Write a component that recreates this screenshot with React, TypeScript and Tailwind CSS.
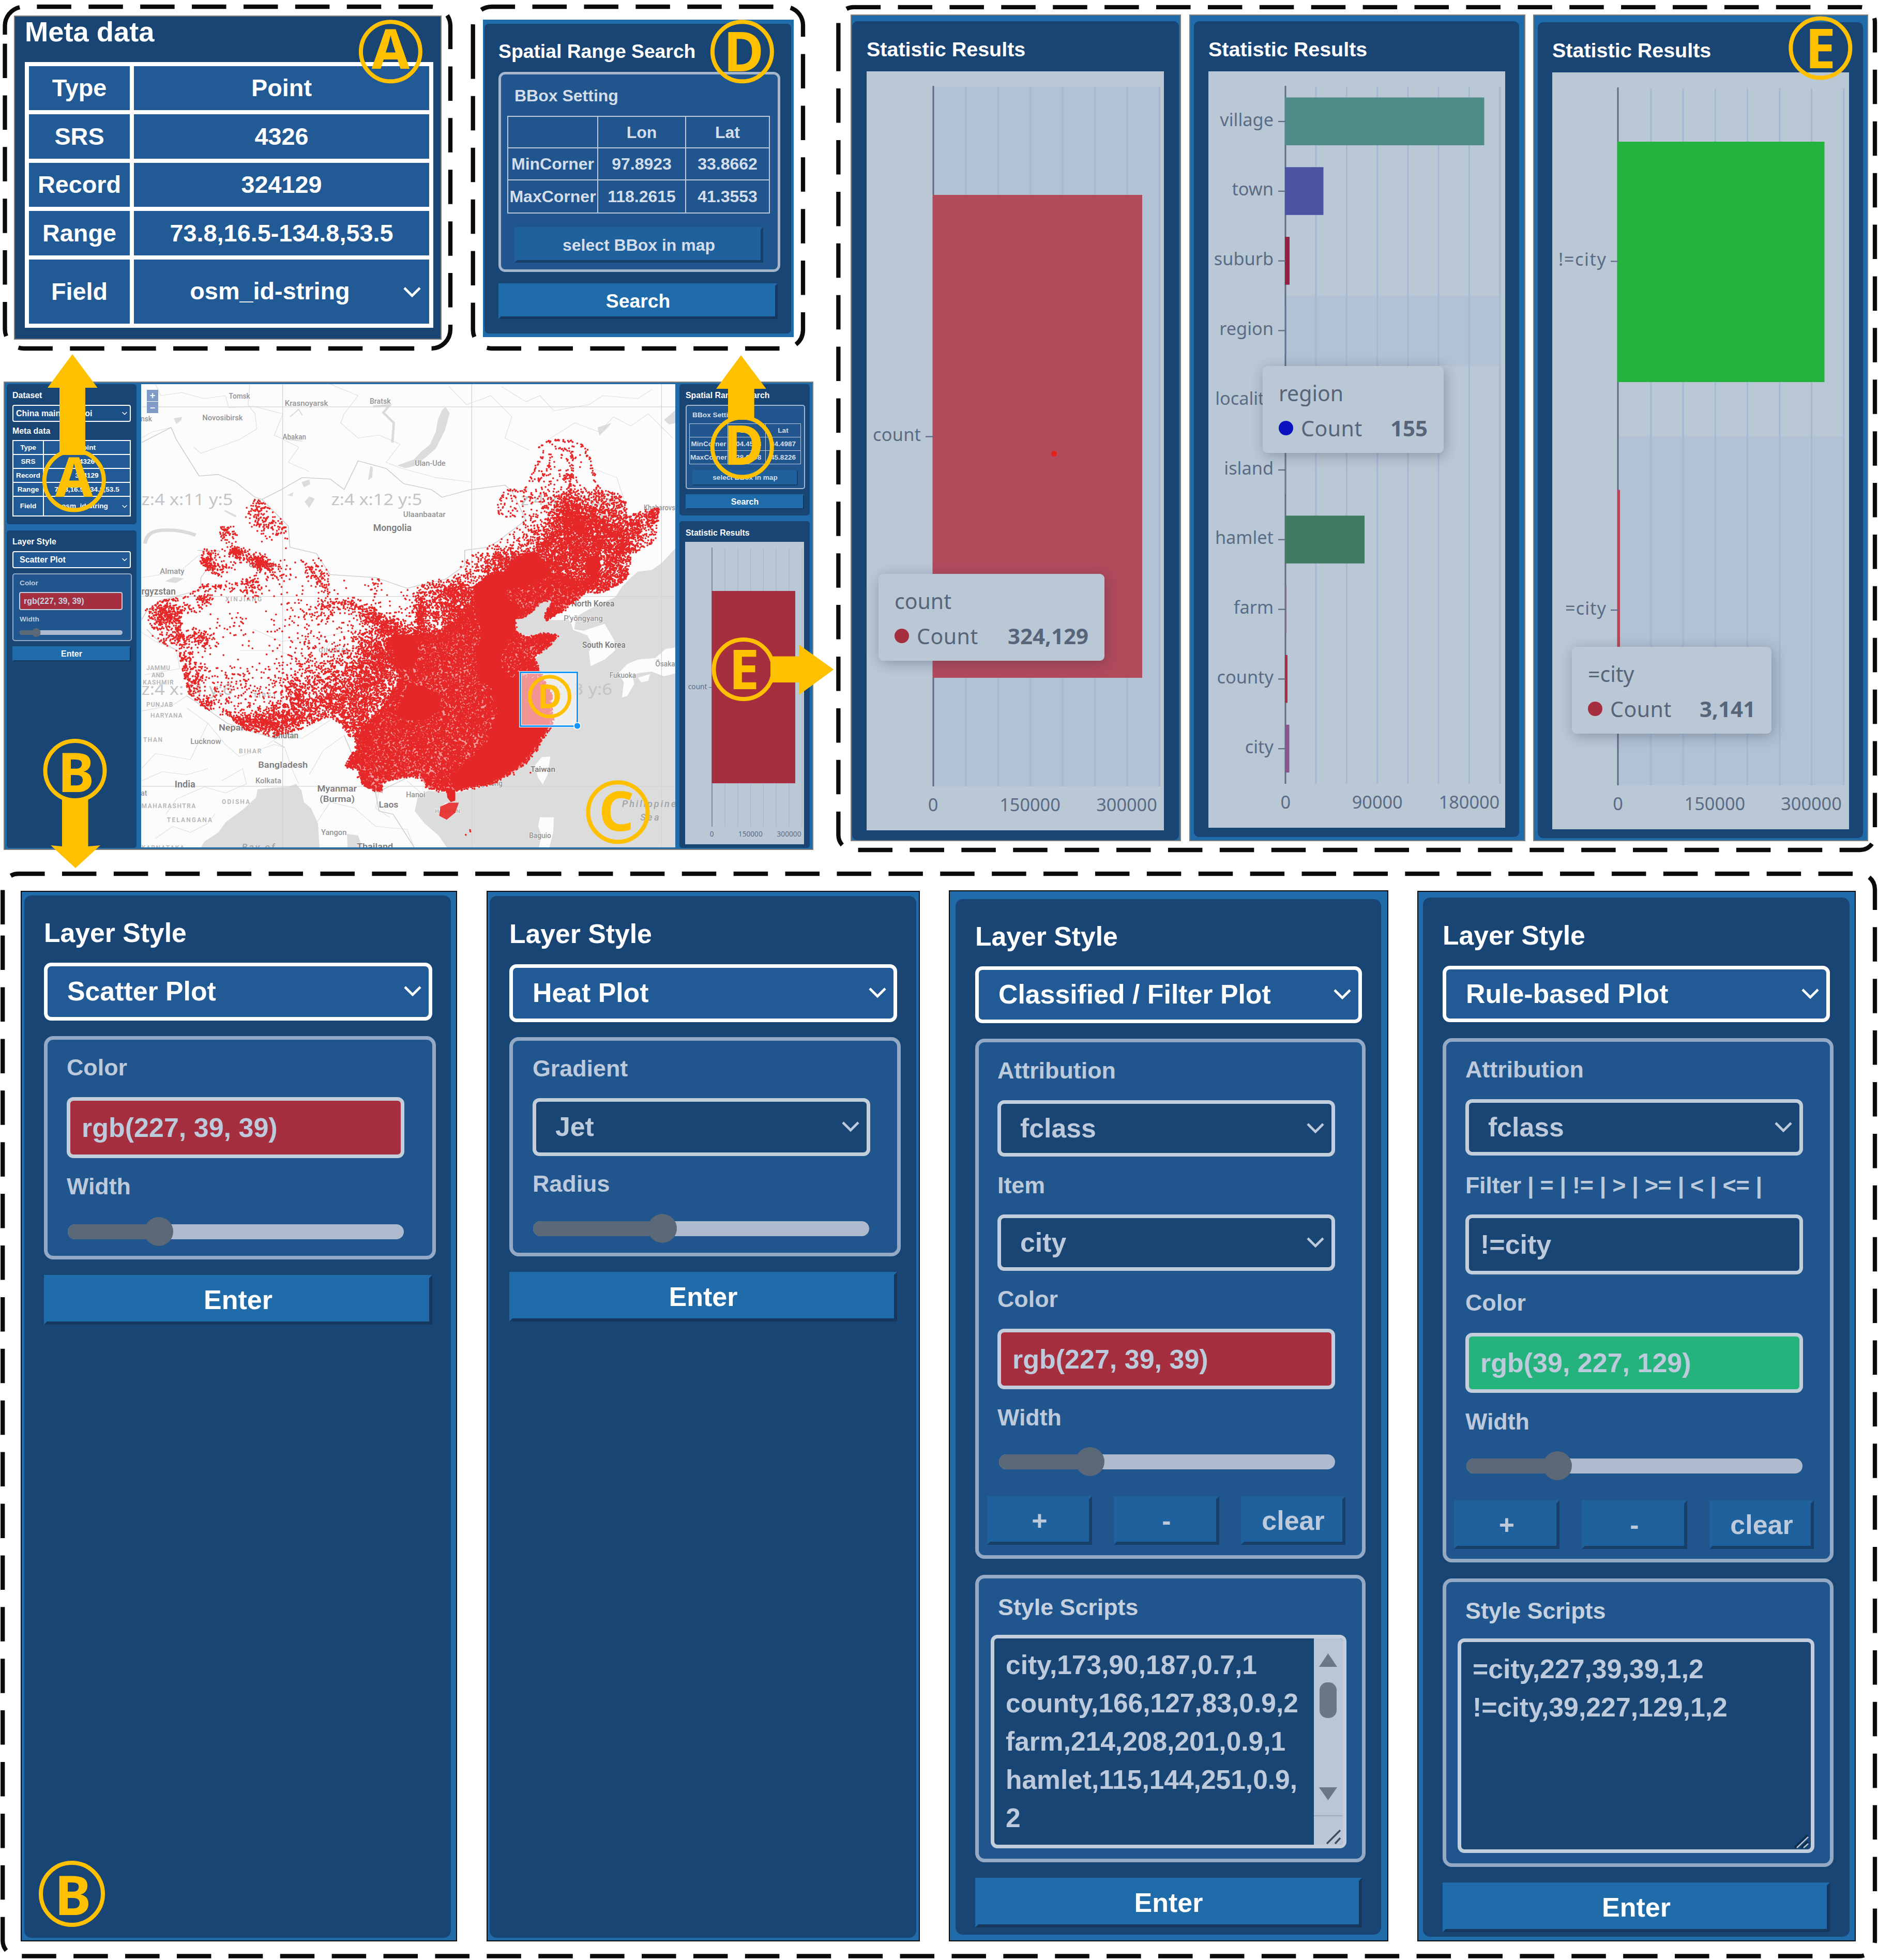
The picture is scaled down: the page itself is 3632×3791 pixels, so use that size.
import React from "react";

/* ---------- small shared pieces ---------- */

function Chevron({ className, w = 4.6 }: { className: string; w?: number }) {
  return (
    <svg className={className} viewBox="0 0 34 22" fill="none" stroke="currentColor" strokeWidth={w}>
      <path d="M2 3 L17 18 L32 3" />
    </svg>
  );
}

function Text({ className, children }: { className: string; children: React.ReactNode }) {
  return <div className={`flex shrink-0 items-center whitespace-nowrap leading-none ${className}`}>{children}</div>;
}

function Slider({ className, track, thumb, at }: { className: string; track: string; thumb: string; at: number }) {
  return (
    <div className={`relative flex shrink-0 items-center ${className}`}>
      <div className={`w-full overflow-hidden rounded-full bg-[#aebacd] ${track}`}>
        <div className="h-full bg-[#5b6878]" style={{ width: `${at}%` }} />
      </div>
      <div className={`absolute top-0 -translate-x-1/2 rounded-full bg-[#5b6878] ${thumb}`} style={{ left: `${at}%` }} />
    </div>
  );
}

function Button({ className, children, soft }: { className: string; children: React.ReactNode; soft?: boolean }) {
  const tone = soft
    ? "bg-[#1f619c] border-t-[#1f619c] border-l-[#1f619c] border-r-[#173f6a] border-b-[#173f6a]"
    : "bg-[#206cab] border-t-[#206cab] border-l-[#206cab] border-r-[#15385c] border-b-[#15385c]";
  return (
    <button className={`flex shrink-0 items-center justify-center whitespace-nowrap font-bold leading-none ${tone} ${className}`}>
      {children}
    </button>
  );
}

type DashProps = { x: number; y: number; r: number; b: number; radius: number; start: number };

function DashedFrame({ x, y, r, b, radius, start }: DashProps) {
  const q = radius;
  const d = `M${x} ${start}V${y + q}A${q} ${q} 0 0 1 ${x + q} ${y}H${r - q}A${q} ${q} 0 0 1 ${r} ${y + q}V${b - q}A${q} ${q} 0 0 1 ${r - q} ${b}H${x + q}A${q} ${q} 0 0 1 ${x} ${b - q}Z`;
  return <path d={d} fill="none" stroke="#0b0b0b" strokeWidth="8.3" strokeDasharray="66.5 33.4" />;
}

/* ---------- metadata and bbox tables ---------- */

const META = [
  ["Type", "Point"],
  ["SRS", "4326"],
  ["Record", "324129"],
  ["Range", "73.8,16.5-134.8,53.5"],
];

function MetaTable({ className, chevron, pad }: { className: string; chevron: string; pad: string }) {
  const cell = "flex items-center justify-center bg-[#215a95] leading-none whitespace-nowrap";
  return (
    <div className={`grid shrink-0 bg-white font-bold text-white ${className}`}>
      {META.map(([k, v]) => (
        <React.Fragment key={k}>
          <div className={cell}>{k}</div>
          <div className={cell}>{v}</div>
        </React.Fragment>
      ))}
      <div className={cell}>Field</div>
      <div className={`${cell} relative ${pad}`}>
        osm_id-string
        <Chevron className={`absolute ${chevron}`} />
      </div>
    </div>
  );
}

function BBoxTable({ className, rows }: { className: string; rows: string[][] }) {
  return (
    <div className={`grid shrink-0 bg-[#bccadb] font-bold text-[#d3deea] ${className}`}>
      {rows.flat().map((t, i) => (
        <div key={i} className="flex items-center justify-center whitespace-nowrap bg-[#20558e] leading-none">
          {t}
        </div>
      ))}
    </div>
  );
}

/* ---------- bar charts ---------- */

type Bar = { y: number; h: number; to: number; fill: string };
type ChartProps = {
  className: string;
  box: [number, number, number, number];
  axis: number;
  top: number;
  bottom: number;
  grid: number[];
  band?: [number, number, number];
  bars: Bar[];
  cats: [string, number, number?][];
  labelX: number;
  ticks: [string, number][];
  tickY: number;
  size: number;
  line: number;
  tickLen: number;
  children?: React.ReactNode;
};

function BarChart(p: ChartProps) {
  return (
    <div className={`relative shrink-0 bg-[#bac7d5] ${p.className}`}>
      <svg className="block h-full w-full" viewBox={p.box.join(" ")} preserveAspectRatio="none">
        {p.band && <rect x={p.axis} y={p.band[0]} width={p.band[2] - p.axis} height={p.band[1] - p.band[0]} fill="#b2c1d3" />}
        {p.grid.map((g) => (
          <line key={g} x1={g} x2={g} y1={p.top + 2} y2={p.bottom} stroke="#a5b8d1" strokeWidth={p.line} />
        ))}
        <line x1={p.axis} x2={p.axis} y1={p.top} y2={p.bottom} stroke="#5c6e86" strokeWidth={p.line} />
        {p.bars.map((b) => (
          <rect key={b.y} x={p.axis - p.line / 3} y={b.y} width={b.to - p.axis + p.line / 3} height={b.h} fill={b.fill} />
        ))}
        <g fill="#5a6c85" fontSize={p.size} fontWeight={400} fontFamily="'Noto Sans', sans-serif">
          {p.cats.map(([t, y, w]) => (
            <g key={t}>
              <line x1={p.axis - p.tickLen} x2={p.axis} y1={y} y2={y} stroke="#5c6e86" strokeWidth={p.line * 0.75} />
              <text x={p.labelX} y={y + p.size * 0.25} textAnchor="end" textLength={w}>
                {t}
              </text>
            </g>
          ))}
          {p.ticks.map(([t, x]) => (
            <text key={t} x={x} y={p.tickY} textAnchor="middle">
              {t}
            </text>
          ))}
        </g>
      </svg>
      {p.children}
    </div>
  );
}

function Tooltip({ className, name, value, dot }: { className: string; name: string; value: string; dot: string }) {
  return (
    <div
      className={`absolute flex h-[168px] flex-col rounded-[9px] bg-[#bac7d5] px-[31px] pt-[18px] font-['Noto_Sans'] text-[41px] text-[#56657a] shadow-[3px_5px_26px_rgba(40,50,75,0.33)] ${className}`}
    >
      <div className="flex h-[68px] items-center leading-none">{name}</div>
      <div className="flex h-[68px] items-center leading-none">
        <span className={`mr-[15px] size-[28px] rounded-full ${dot}`} />
        <span className="tracking-[0.5px]">Count</span>
        <span className="ml-auto text-[42px] font-bold">{value}</span>
      </div>
    </div>
  );
}

const CATS = ["village", "town", "suburb", "region", "locality", "island", "hamlet", "farm", "county", "city"];
const CLASS_BARS: [number, number, string][] = [
  [0, 2870.5, "#4f8c88"],
  [1, 2559.5, "#4a54a3"],
  [2, 2494, "#96213f"],
  [3, 2487.5, "#6076a0"],
  [5, 2487.3, "#77798c"],
  [6, 2639, "#417c62"],
  [7, 2488, "#806c83"],
  [8, 2490, "#b02c44"],
  [9, 2493.5, "#87568a"],
];

/* ---------- map ---------- */

function makeRandom(seed: number) {
  let s = seed;
  return () => {
    s = (s * 1664525 + 1013904223) % 4294967296;
    return s / 4294967296;
  };
}

const OUTLINE = [
  35, 770, 75, 735, 150, 720, 190, 700, 180, 655, 190, 590, 200, 565, 240, 570, 245, 490, 310, 480, 320, 430, 345, 402, 370, 402, 400, 445,
  445, 495, 440, 560, 520, 578, 560, 650, 690, 660, 780, 700, 850, 665, 910, 665, 945, 590, 1010, 560, 1090, 500, 1120, 470, 1040, 455,
  1045, 410, 1060, 370, 1110, 380, 1130, 330, 1160, 265, 1145, 235, 1190, 205, 1240, 205, 1290, 230, 1310, 300, 1330, 370, 1380, 385, 1400,
  410, 1410, 460, 1450, 450, 1503, 428, 1480, 550, 1415, 580, 1420, 610, 1405, 670, 1340, 710, 1290, 715, 1230, 765, 1180, 803, 1172, 785,
  1195, 730, 1160, 745, 1120, 790, 1090, 795, 1095, 840, 1130, 857, 1170, 840, 1212, 850, 1190, 885, 1143, 920, 1160, 975, 1195, 1040, 1200,
  1140, 1150, 1230, 1100, 1290, 1030, 1340, 910, 1368, 840, 1358, 815, 1318, 780, 1318, 710, 1340, 710, 1372, 690, 1368, 640, 1340, 640, 1300,
  600, 1285, 635, 1210, 590, 1150, 560, 1120, 500, 1140, 470, 1172, 395, 1185, 320, 1165, 270, 1120, 205, 1098, 150, 1040, 125, 905, 50, 860,
];

/* the thickly covered east of the country */
const EAST = [
  970, 690, 1010, 650, 1055, 642, 1190, 640, 1285, 670, 1333, 640, 1310, 690, 1235, 760, 1180, 800, 1175, 785, 1196, 730, 1165, 742, 1120, 790,
  1088, 795, 1092, 840, 1128, 858, 1170, 845, 1208, 853, 1188, 885, 1143, 922, 1160, 975, 1192, 1040, 1195, 1140, 1150, 1225, 1110, 1283, 1030,
  1338, 910, 1366, 840, 1355, 815, 1316, 780, 1316, 710, 1336, 710, 1370, 690, 1365, 650, 1342, 640, 1290, 604, 1283, 632, 1245, 640, 1190, 655,
  1150, 700, 1110, 735, 1040, 760, 990, 725, 930, 720, 880, 745, 845, 820, 850, 880, 830, 920, 800, 960, 740,
];

/* areas where the marks merge into one colour */
const SOLID = [
  "M972 690L1012 655L1040 642L1058 650L1062 730L1095 745L1115 775L1090 795L1090 838L1060 870L1045 950L1070 985L1120 1000L1150 985L1185 1050L1188 1140L1140 1225L1100 1280L1030 1330L920 1360L900 1320L960 1260L1010 1200L1040 1100L1020 1020L985 1000L975 900L1000 850L980 800L975 740Z",
  "M1010 655L1055 642L1085 600L1120 580L1148 575L1190 635L1185 655L1120 690L1060 700Z",
  "M1295 592L1328 585L1335 625L1318 655L1290 650Z",
  "M735 850L800 850L815 910L800 950L760 960L740 900Z",
  "M780 1010L830 1020L880 1050L870 1100L830 1130L780 1130L745 1110L770 1060Z",
];

/* cx, cy, spread x, spread y, count */
const CLUSTERS = [
  [350, 425, 14, 20, 60], [370, 480, 18, 26, 80], [415, 500, 20, 22, 50], [265, 510, 16, 18, 70], [215, 575, 18, 10, 40], [205, 610, 14, 12, 80],
  [240, 625, 24, 12, 60], [290, 575, 12, 9, 120], [320, 590, 20, 10, 50], [362, 612, 14, 12, 170], [400, 640, 20, 14, 50], [335, 690, 16, 18, 80],
  [200, 730, 12, 10, 60], [240, 690, 40, 8, 45], [88, 780, 22, 24, 260], [60, 790, 18, 22, 60], [125, 800, 8, 28, 70], [155, 760, 30, 8, 30],
  [150, 855, 36, 12, 120], [110, 870, 30, 14, 60], [200, 870, 14, 14, 45], [145, 930, 12, 22, 70], [175, 965, 20, 24, 60], [165, 1020, 16, 22, 80],
  [205, 1075, 12, 12, 50], [515, 640, 22, 22, 50], [540, 690, 10, 16, 20], [585, 745, 34, 12, 60], [540, 780, 40, 22, 50], [650, 765, 30, 14, 60],
  [685, 795, 20, 12, 130], [725, 825, 18, 14, 150], [300, 820, 50, 30, 24], [690, 690, 12, 20, 22], [275, 1050, 50, 44, 130], [320, 1135, 34, 16, 220],
  [400, 1140, 40, 20, 380], [440, 1110, 46, 30, 260], [465, 1035, 14, 22, 90], [520, 1090, 50, 32, 360], [480, 1000, 60, 40, 150], [600, 1010, 50, 44, 420],
  [570, 930, 60, 50, 160], [660, 900, 30, 50, 220], [630, 1100, 44, 50, 650], [690, 1010, 40, 60, 750], [710, 920, 30, 40, 400], [650, 1180, 24, 50, 320],
  [620, 1260, 14, 14, 120], [840, 720, 30, 30, 130], [818, 790, 8, 36, 170], [780, 800, 50, 30, 80], [920, 700, 34, 20, 280], [890, 780, 50, 36, 380],
  [800, 850, 60, 16, 420], [930, 760, 30, 50, 500], [960, 640, 30, 30, 50], [1030, 580, 50, 30, 60], [1120, 540, 50, 30, 110], [1190, 570, 30, 40, 320],
  [1245, 450, 34, 40, 700], [1290, 480, 40, 40, 700], [1260, 540, 60, 50, 1200], [1300, 620, 50, 50, 800], [1210, 640, 50, 30, 400], [1370, 490, 36, 44, 480],
  [1400, 540, 36, 30, 420], [1455, 480, 30, 28, 260], [1490, 445, 12, 16, 100], [1385, 610, 30, 40, 380], [1340, 680, 40, 20, 320], [1370, 410, 28, 20, 100],
  [1330, 385, 16, 14, 40], [1160, 390, 40, 20, 50], [1080, 420, 30, 24, 40], [1235, 260, 34, 30, 30], [1200, 330, 40, 12, 34], [1245, 330, 6, 40, 30],
  [1160, 470, 40, 40, 60], [1170, 860, 26, 12, 200], [1190, 780, 20, 14, 120], [1180, 1100, 10, 60, 100], [450, 1060, 120, 90, 180], [560, 820, 90, 50, 40],
  [1100, 640, 60, 40, 1500], [1100, 1100, 60, 160, 1200],
];

/* chains of points along borders, rivers and roads */
const CHAINS = [
  [1145, 238, 1190, 208, 1240, 206, 1288, 228, 1308, 300, 1328, 368, 1380, 384, 1402, 412, 1408, 458, 1500, 430],
  [1165, 262, 1140, 320, 1112, 378, 1062, 370, 1044, 410, 1042, 455],
  [1200, 232, 1250, 240, 1255, 300, 1242, 390],
  [1190, 262, 1185, 300, 1150, 350],
  [1500, 430, 1485, 540, 1420, 585, 1418, 610, 1400, 668, 1340, 708],
  [35, 768, 75, 738, 150, 722, 195, 690, 260, 688],
  [130, 905, 150, 1000, 160, 1045, 212, 1094],
  [190, 590, 215, 640, 250, 655],
  [480, 600, 520, 655, 555, 718],
  [560, 740, 610, 742, 660, 770, 730, 830],
  [250, 1090, 320, 1160, 395, 1182, 470, 1160, 540, 1120],
];

function inside(px: number, py: number, poly: number[]) {
  let hit = false;
  for (let i = 0, j = poly.length - 2; i < poly.length; j = i, i += 2) {
    const xi = poly[i], yi = poly[i + 1], xj = poly[j], yj = poly[j + 1];
    if (yi > py !== yj > py && px < ((xj - xi) * (py - yi)) / (yj - yi) + xi) hit = !hit;
  }
  return hit;
}

const SX = 0.676;
const SY = 0.5867;

function buildPoints() {
  const rnd = makeRandom(7);
  const gauss = () => rnd() + rnd() + rnd() + rnd() - 2;
  const out: string[] = [];
  const add = (x: number, y: number) => out.push(`M${(x * SX + 260).toFixed(1)} ${(y * SY + 730).toFixed(1)}h0`);
  for (const [cx, cy, sx, sy, n] of CLUSTERS) {
    for (let i = 0; i < n; i++) {
      const x = cx + gauss() * sx * 1.7;
      const y = cy + gauss() * sy * 1.7;
      if (inside(x, y, OUTLINE)) add(x, y);
    }
  }
  for (let i = 0; i < 42000; i++) {
    const x = 600 + rnd() * 740;
    const y = 640 + rnd() * 735;
    if (inside(x, y, EAST)) add(x + gauss() * 5, y + gauss() * 5);
  }
  for (const c of CHAINS) {
    for (let i = 0; i + 3 < c.length; i += 2) {
      const len = Math.hypot(c[i + 2] - c[i], c[i + 3] - c[i + 1]);
      const n = Math.round(len / 5);
      for (let k = 0; k < n; k++) {
        const t = rnd();
        add(c[i] + (c[i + 2] - c[i]) * t + gauss() * 4, c[i + 1] + (c[i + 3] - c[i + 1]) * t + gauss() * 4);
      }
    }
  }
  for (let i = 0; i < 600; i++) {
    const x = 400 + rnd() * 900;
    const y = 600 + rnd() * 560;
    if (inside(x, y, OUTLINE)) add(x, y);
  }
  for (let i = 0; i < 70; i++) {
    const x = 200 + rnd() * 300;
    const y = 700 + rnd() * 350;
    if (inside(x, y, OUTLINE)) add(x, y);
  }
  [[948, 1508], [960, 1492], [961, 1497], [1133, 1303]].forEach(([x, y]) => add(x, y));
  return out.join("");
}

const POINTS = buildPoints();

/* text, left, centre y, width, size, tone: 0 city, 1 country, 2 region, 3 tile, 4 sea */
const PLACES: [string, number, number, number, number, number][] = [
  ["Tomsk", 270, 61, 61, 15, 0], ["Krasnoyarsk", 430, 85, 124, 15, 0], ["Bratsk", 673, 77, 60, 15, 0], ["Novosibirsk", 194, 133, 116, 15, 0],
  ["nsk", 18, 135, 32, 15, 0], ["Abakan", 424, 195, 67, 15, 0], ["Ulan-Ude", 802, 282, 88, 15, 0], ["Ulaanbaatar", 769, 451, 121, 15, 0],
  ["Khabarovs", 1457, 428, 90, 15, 0], ["Almaty", 73, 638, 70, 15, 0], ["Urumqi", 327, 617, 74, 15, 0], ["Xining", 680, 917, 56, 15, 0],
  ["Lucknow", 160, 1199, 88, 15, 0], ["Kolkata", 346, 1329, 74, 15, 0], ["Hanoi", 777, 1375, 55, 15, 0], ["Yangon", 534, 1499, 73, 15, 0],
  ["Baguio", 1129, 1510, 63, 15, 0], ["Fukuoka", 1359, 981, 76, 15, 0], ["Ōsaka", 1490, 943, 57, 15, 0], ["P'yŏngyang", 1228, 794, 112, 15, 0],
  ["Hong Kong", 955, 1338, 98, 15, 0], ["at", 18, 1370, 18, 15, 0], ["Mongolia", 683, 496, 110, 18, 1], ["rgyzstan", 20, 705, 98, 18, 1],
  ["North Korea", 1250, 745, 123, 16, 1], ["South Korea", 1281, 881, 124, 16, 1], ["Nepal", 241, 1154, 70, 17, 1], ["Bhutan", 397, 1180, 72, 16, 1],
  ["Bangladesh", 354, 1276, 142, 17, 1], ["India", 115, 1341, 59, 18, 1], ["Myanmar", 523, 1354, 113, 17, 1], ["(Burma)", 530, 1389, 100, 17, 1],
  ["Laos", 699, 1408, 56, 17, 1], ["Thailand", 636, 1545, 104, 17, 1], ["Taiwan", 1133, 1292, 71, 15, 1],
  ["JAMMU", 34, 958, 68, 12, 2], ["AND", 49, 982, 36, 12, 2], ["KASHMIR", 24, 1005, 88, 12, 2], ["PUNJAB", 34, 1079, 76, 12, 2],
  ["HARYANA", 46, 1115, 91, 12, 2], ["THAN", 25, 1194, 55, 12, 2], ["BIHAR", 299, 1231, 64, 12, 2], ["ODISHA", 250, 1398, 80, 12, 2],
  ["MAHARASHTRA", 20, 1412, 155, 12, 2], ["TELANGANA", 93, 1459, 129, 12, 2], ["KARNATAKA", 20, 1550, 122, 12, 2], ["XINJIANG", 260, 731, 104, 12, 2],
  ["QINGHAI", 527, 899, 82, 12, 2], ["TIBET", 340, 1048, 66, 12, 2], ["HAINAN", 860, 1430, 72, 11, 2], ["INNER", 1040, 597, 66, 12, 2],
  ["MONGOLIA", 1018, 623, 110, 12, 2], ["JIANG", 1330, 458, 78, 12, 2],
  ["z:4 x:11 y:5", 20, 402, 262, 31, 3], ["z:4 x:12 y:5", 563, 402, 260, 31, 3], ["z:4 x:13 y:5", 1105, 402, 260, 31, 3],
  ["z:4 x:11 y:6", 20, 1028, 262, 31, 3], ["z:4 x:13 y:6", 1105, 1028, 262, 31, 3],
  ["Philippine", 1395, 1405, 154, 18, 4], ["Sea", 1447, 1450, 54, 18, 4], ["Bay of", 307, 1549, 94, 18, 4],
];
const TONES = ["#949494", "#7d7d7d", "#b4b4b4", "#c4c4c4", "#a0a3a6"];
const WEIGHTS = [500, 600, 600, 400, 500];

function PlaceLabels({ tiles }: { tiles: boolean }) {
  return (
    <g stroke="#fcfcfc" strokeWidth={tiles ? 0 : 2} paintOrder="stroke" strokeOpacity="0.6">
      {PLACES.filter((p) => (p[5] === 3) === tiles).map(([t, x, y, w, size, tone]) => (
        <text
          key={t}
          x={x * SX + 260}
          y={y * SY + 730 + size * 0.36}
          fontSize={size}
          fill={TONES[tone]}
          fontWeight={WEIGHTS[tone]}
          fontStyle={tone === 4 ? "italic" : "normal"}
          fontFamily={tone === 3 ? "'Noto Sans', sans-serif" : "Roboto, sans-serif"}
          strokeWidth={tone === 4 ? 0 : undefined}
          textLength={w * SX}
          lengthAdjust={tone === 2 || tone === 4 ? "spacing" : "spacingAndGlyphs"}
        >
          {t}
        </text>
      ))}
    </g>
  );
}

function MapView() {
  return (
    <div className="relative ml-[9px] mt-[3px] h-[896px] w-[1033px] shrink-0 overflow-hidden bg-[#fcfcfc]">
      <svg className="block h-full w-full" viewBox="273 743 1033 896">
        <g transform="translate(260 730) scale(0.676 0.5867)">
          <g fill="#dcdcdc">
            <path d="M1550 560L1510 610L1480 635L1440 640L1420 660L1395 690L1375 725L1335 745L1300 765L1270 785L1235 800L1180 800L1190 740L1165 740L1090 795L1095 850L1210 850L1145 930L1190 1050L1200 1140L1100 1290L1030 1340L910 1372L840 1362L810 1385L802 1430L830 1470L870 1510L900 1560H1550Z" />
            <path d="M185 1560L200 1530L240 1500L262 1465L310 1425L348 1385L352 1358L400 1352L440 1350L462 1340L478 1362L485 1400L505 1420L525 1470L530 1560Z" />
            <path d="M608 1505L640 1510L655 1560H610Z" />
            <path d="M890 97L902 118L888 175L862 235L835 262L800 292L775 299L752 290L800 270L820 245L845 222L862 180L868 140L880 108Z" />
            <path d="M1515 140L1550 105V150L1530 155Z" />
            <path d="M1325 165L1365 150L1350 170L1330 192Z" />
            <path d="M478 345L500 336L503 352L485 362Z" />
            <path d="M668 340L675 292L682 296L680 330Z" />
            <path d="M112 135L136 130L134 140L120 154Z" />
            <path d="M88 672L112 658L142 663L118 678Z" />
            <path d="M1085 790L1130 780L1160 740L1195 725L1165 800L1170 820L1140 858L1120 845L1125 830L1095 825Z" />
            <path d="M437 388L455 378L452 392Z" />
            <path d="M487 410L500 392L516 400L500 430Z" />
            <path d="M255 440L262 438L292 455L290 462Z" />
          </g>
          <g fill="none" stroke="#dadada">
            <path d="M30 548Q35 510 70 505Q125 498 175 520" strokeWidth="11" />
            <path d="M683 96L730 92L712 116L742 150L738 215" strokeWidth="7" />
            <path d="M445 130L470 105L480 125M440 205L480 210" strokeWidth="3" />
          </g>
          <g fill="#fcfcfc">
            <path d="M1240 795L1265 785L1258 830L1285 835L1345 812L1372 865L1375 900L1345 930L1305 952L1300 905L1310 880L1295 850L1255 832L1250 812Z" />
            <path d="M1385 975L1410 945L1440 930L1490 925L1520 895L1550 890V975L1515 985L1480 970L1440 975L1400 1000L1425 985L1430 1010L1410 1050L1395 1055L1400 1005Z" />
            <path d="M1440 990L1475 978L1470 1000L1450 1005Z" />
            <path d="M1145 1280L1165 1252L1190 1250L1182 1310L1168 1342L1155 1320Z" />
            <path d="M1160 1450L1200 1450L1198 1500L1185 1560H1155L1165 1510L1155 1480Z" />
            <path d="M870 1425L890 1402L926 1405L915 1440L890 1458Z" />
          </g>
          <g fill="none" stroke="#dedede" strokeWidth="1.8" strokeLinejoin="round">
            <path d="M20 200L50 180L105 165M60 22L75 60L135 50L200 70L260 60L270 100L340 95L425 120M330 22L325 90L345 120L350 170L300 205L190 250L170 230M425 120L400 190L470 230L440 280L500 310M560 22L640 60L600 120L590 150L640 200L700 190L760 220M760 220L720 280L765 300L860 330L965 345M900 30L950 90L1020 60L1080 130L1060 200L1130 240M1190 200L1260 150L1330 180L1370 130L1420 160L1470 120L1540 200M1310 300L1380 330L1400 400M1050 30L1120 80L1160 60L1200 110L1300 90L1340 60L1440 70L1480 40" />
            <path d="M20 660L130 640L180 590L240 570M20 840L60 870L120 900L130 960L30 980M20 1100L110 1080L150 1050M150 1090L210 1140L160 1260L60 1240L20 1290M210 1140L260 1210L300 1250L400 1210L430 1220M250 1330L310 1290L320 1340L260 1370L200 1350L120 1390L90 1440M20 1330L80 1300L150 1310L210 1290M60 1520L110 1480L160 1500L210 1470L230 1440" />
            <path d="M430 1220L450 1290L470 1340M500 1310L540 1230L600 1180M520 1470L560 1400L630 1420L690 1480L780 1490L800 1549M700 1360L690 1420L730 1450M780 1330L830 1380M380 1210L420 1180L480 1190L560 1130" />
            <path d="M340 830L420 870L520 860L640 830M300 900L410 900L520 950L560 870" />
          </g>
          <g fill="none" stroke="#c9c9c9" strokeWidth="2.2" strokeLinejoin="round">
            <path d="M20 215L105 165L120 205L185 325L240 320L290 345L345 395L365 402L420 370L480 330L560 335L600 370L640 275L720 300L770 350L850 370L880 395L960 370L1060 355L1080 375L1120 470L1040 540L1010 560L945 570L945 620L890 665L780 695L690 660L560 650L520 580L445 560L440 490L365 402" />
            <path d="M180 570L245 572L190 660L190 700L75 735L35 770L20 800M130 905L60 860L35 830M150 1050L210 1095L265 1140L330 1165L400 1190M430 1220L400 1200M600 1180L640 1290L690 1370L780 1320M690 1370L700 1430L740 1440L800 1549" />
          </g>
          <g stroke="#d3d3d3" strokeWidth="2">
            <path d="M424 22V1550M965 22V1550M1508 22V1550M20 97H1547M20 722H1547M20 1348H1547" />
          </g>
        </g>
        <PlaceLabels tiles />
        <PlaceLabels tiles={false} />
        <g transform="translate(260 730) scale(0.676 0.5867)" fill="#e52728">
          <path d={"M" + EAST.join(" ") + "Z"} fillOpacity="0.45" />
          {SOLID.map((d) => (
            <path key={d} d={d} />
          ))}
          <path d="M875 1415L900 1402L928 1402L918 1435L893 1458L872 1445Z" fillOpacity="0.9" />
          <path d="M893 1362L918 1358L918 1395L905 1400L895 1385Z" />
        </g>
        <path d={POINTS} stroke="#e52728" strokeWidth="3.7" strokeLinecap="round" />
        <rect x="1006.5" y="1300.5" width="110" height="104" fill="#ffffff" fillOpacity="0.5" stroke="#ffffff" strokeWidth="5" />
        <rect x="1006.5" y="1300.5" width="110" height="104" fill="none" stroke="#1596ff" strokeWidth="3" />
        <circle cx="1116.5" cy="1404" r="6.5" fill="#1596ff" stroke="#fff" strokeWidth="1.5" />
      </svg>
      <div className="absolute left-[11px] top-[11px] flex flex-col gap-px font-['Liberation_Sans'] text-[18px] font-bold leading-none text-white">
        <div className="flex h-[22px] w-[22px] items-center justify-center bg-[#7f9bc8]">+</div>
        <div className="flex h-[22px] w-[22px] items-center justify-center bg-[#7f9bc8]">–</div>
      </div>
    </div>
  );
}

/* ---------- callouts ---------- */

function Badge({ letter, x, y, dx = 0, dy = 0, r = 57.5, size = 106, stroke = 8 }: { letter: string; x: number; y: number; dx?: number; dy?: number; r?: number; size?: number; stroke?: number }) {
  return (
    <g>
      <circle cx={x} cy={y} r={r} fill="none" stroke="#ffc000" strokeWidth={stroke} />
      <text x={x + dx} y={y + dy + size * 0.357} fontSize={size} fontWeight={700} fontFamily="'Noto Sans', sans-serif" fill="#ffc000" textAnchor="middle">
        {letter}
      </text>
    </g>
  );
}

/* ---------- layer style panels ---------- */

function StyleSelect({ className, children }: { className: string; children: React.ReactNode }) {
  return (
    <div className={`flex shrink-0 items-center justify-between whitespace-nowrap rounded-[14px] border-[7px] border-white bg-[#215a95] pl-[38px] pr-[14px] text-[51.8px] leading-none text-white ${className}`}>
      {children}
      <Chevron className="mb-[2px] h-[22px] w-[34px]" />
    </div>
  );
}

function SubSelect({ className, children }: { className: string; children: React.ReactNode }) {
  return (
    <div className={`flex w-[653px] shrink-0 items-center justify-between whitespace-nowrap rounded-[13px] border-[7px] border-[#c3cedd] bg-[#194575] pl-[37px] pr-[14px] text-[51.8px] leading-none text-[#bccadb] ${className}`}>
      {children}
      <Chevron className="mb-[2px] h-[22px] w-[34px]" />
    </div>
  );
}

function SubInput({ className, children }: { className: string; children: React.ReactNode }) {
  return (
    <div className={`flex w-[653px] shrink-0 items-center whitespace-nowrap rounded-[13px] border-[7px] border-[#c3cedd] pl-[22px] text-[52px] leading-none text-[#bccadb] ${className}`}>
      {children}
    </div>
  );
}

const FIELDSET = "flex shrink-0 flex-col rounded-[18px] border-[7px] border-[#94a9c4] bg-[#20558e]";
const SUBLABEL = "h-[50px] text-[44.8px] text-[#bccadb]";
const SLIDER = "ml-[39px] h-[56px] w-[650px]";
const ENTER = "h-[96px] border-[6px] text-[52px] text-white";
const SMALLBTN = "h-[94px] border-[6px] text-[52px] text-[#bccadb]";
const HEADING = "h-[60px] text-[51.7px] text-white";

function StylePanel({ className, children }: { className: string; children: React.ReactNode }) {
  return (
    <section className={`shrink-0 border-2 border-[#0c0c0c] bg-[#206cab] ${className}`}>
      <div className="flex h-full flex-col rounded-[14px] bg-[#194575] pl-[38px] font-bold">{children}</div>
    </section>
  );
}

function StatPanel({ className, inner, children }: { className: string; inner: string; children: React.ReactNode }) {
  return (
    <section className={`shrink-0 border-2 border-[#7f7f7f] bg-[#206cab] ${className}`}>
      <div className={`flex h-full flex-col rounded-[10px] bg-[#194575] ${inner}`}>
        <Text className="mt-[30px] h-[50px] text-[39.5px] font-bold text-white">Statistic Results</Text>
        {children}
      </div>
    </section>
  );
}

export default function App() {
  return (
    <div className="relative flex h-[3791px] w-[3632px] flex-col overflow-hidden bg-white font-['Liberation_Sans',Arial,sans-serif]">
      <div className="flex h-[1700px] shrink-0">
        <div className="flex w-[1645px] shrink-0 flex-col">
          <div className="flex h-[738px] shrink-0">
            {/* metadata detail */}
            <section className="ml-[27px] mt-[30px] flex h-[627px] w-[827px] shrink-0 flex-col border-2 border-[#7f7f7f] bg-[#194575] pl-[19px]">
              <Text className="mt-[2px] h-[56px] text-[54.3px] font-bold text-white">Meta data</Text>
              <MetaTable
                className="mt-[30px] w-[790px] grid-cols-[195px_571px] grid-rows-[85px_86px_85px_86px_124px] gap-[8px] p-[8px] text-[46.8px]"
                chevron="right-[16px] top-[52px] h-[22px] w-[34px]"
                pad="pr-[45px] pb-[2px]"
              />
            </section>
            {/* spatial search detail */}
            <section className="ml-[80px] mt-[38px] h-[614px] w-[601px] shrink-0 bg-[#206cab] pb-[7px] pl-[3px] pr-[5px] pt-[8px]">
              <div className="flex h-full flex-col rounded-[8px] bg-[#194575] pl-[27px]">
                <Text className="mt-[32px] h-[44px] text-[37.3px] font-bold text-white">Spatial Range Search</Text>
                <div className="mt-[17px] flex h-[387px] w-[545px] shrink-0 flex-col rounded-[13px] border-[5px] border-[#a6b6cd] bg-[#20558e]">
                  <Text className="ml-[26px] mt-[23px] h-[36px] text-[32px] font-bold text-[#d3deea]">BBox Setting</Text>
                  <BBoxTable
                    className="ml-[12px] mt-[21px] w-[508px] grid-cols-[172px_168px_160px] grid-rows-[59px_60px_62px] gap-[2px] p-[2px] text-[32px]"
                    rows={[["", "Lon", "Lat"], ["MinCorner", "97.8923", "33.8662"], ["MaxCorner", "118.2615", "41.3553"]]}
                  />
                  <Button soft className="ml-[26px] mt-[26px] h-[69px] w-[481px] border-[5px] text-[32px] text-[#d3deea]">
                    select BBox in map
                  </Button>
                </div>
                <Button className="mt-[22px] h-[69px] w-[540px] border-[5px] text-[37.3px] text-white">Search</Button>
              </div>
            </section>
          </div>

          {/* full application */}
          <main className="ml-[7px] flex h-[906px] w-[1566px] shrink-0 border-2 border-[#7f7f7f] bg-[#206cab] font-bold">
            <div className="ml-[4px] mt-[3px] flex w-[251px] shrink-0 flex-col">
              <div className="flex h-[271px] shrink-0 flex-col rounded-[5px] bg-[#194575] pl-[11px]">
                <Text className="mt-[12px] h-[20px] text-[15.9px] text-white">Dataset</Text>
                <div className="mt-[8px] flex h-[33px] w-[229px] shrink-0 items-center justify-between rounded-[4px] border-2 border-white bg-[#1d4f87] pl-[5px] pr-[5px] text-[16px] leading-none text-white">
                  China mainland poi
                  <Chevron className="h-[7px] w-[10px]" w={5} />
                </div>
                <Text className="mt-[8px] h-[20px] text-[15.9px] text-white">Meta data</Text>
                <MetaTable
                  className="mt-[7px] w-[229px] grid-cols-[57px_166px] grid-rows-[25px_25px_25px_25px_36px] gap-[2px] p-[2px] text-[13.6px]"
                  chevron="right-[5px] top-[15px] h-[7px] w-[10px]"
                  pad="pr-[8px]"
                />
              </div>
              <div className="mt-[12px] flex h-[614px] shrink-0 flex-col rounded-[5px] bg-[#194575] pl-[11px]">
                <Text className="mt-[12px] h-[20px] text-[15.9px] text-white">Layer Style</Text>
                <div className="mt-[8px] flex h-[33px] w-[229px] shrink-0 items-center justify-between rounded-[4px] border-2 border-white bg-[#215a95] pl-[12px] pr-[5px] text-[16px] leading-none text-white">
                  Scatter Plot
                  <Chevron className="h-[7px] w-[10px]" w={5} />
                </div>
                <div className="mt-[10px] flex h-[131px] w-[231px] shrink-0 flex-col rounded-[5px] border-2 border-[#94a9c4] bg-[#20558e]">
                  <Text className="ml-[12px] mt-[8px] h-[17px] text-[13.7px] text-[#bccadb]">Color</Text>
                  <div className="ml-[11px] mt-[9px] flex h-[35px] w-[200px] shrink-0 items-center rounded-[4px] border-2 border-[#c3cedd] bg-[#a52f3e] pl-[7px] text-[16px] leading-none text-[#c8d3e0]">
                    rgb(227, 39, 39)
                  </div>
                  <Text className="ml-[12px] mt-[9px] h-[17px] text-[13.7px] text-[#bccadb]">Width</Text>
                  <Slider className="ml-[12px] mt-[9px] h-[17px] w-[199px]" track="h-[9px]" thumb="size-[17px]" at={16} />
                </div>
                <Button className="mt-[10px] h-[29px] w-[229px] border-2 text-[16px] text-white">Enter</Button>
              </div>
            </div>

            <MapView />

            <div className="ml-[8px] mt-[3px] flex w-[252px] shrink-0 flex-col">
              <div className="flex h-[254px] shrink-0 flex-col rounded-[5px] bg-[#194575] pl-[12px]">
                <Text className="mt-[12px] h-[20px] text-[15.9px] text-white">Spatial Range Search</Text>
                <div className="mt-[8px] flex h-[163px] w-[231px] shrink-0 flex-col rounded-[5px] border-2 border-[#a6b6cd] bg-[#20558e]">
                  <Text className="ml-[11px] mt-[9px] h-[17px] text-[13.7px] text-[#d3deea]">BBox Setting</Text>
                  <BBoxTable
                    className="ml-[5px] mt-[8px] w-[216px] grid-cols-[73px_72px_67px] grid-rows-[25px_25px_25px] gap-px p-px text-[13.6px]"
                    rows={[["", "Lon", "Lat"], ["MinCorner", "104.4518", "34.4987"], ["MaxCorner", "128.6798", "45.8226"]]}
                  />
                  <Button soft className="ml-[11px] mt-[11px] h-[30px] w-[204px] border-2 text-[13.6px] text-[#d3deea]">
                    select BBox in map
                  </Button>
                </div>
                <Button className="mt-[10px] h-[29px] w-[229px] border-2 text-[16px] text-white">Search</Button>
              </div>
              <div className="mt-[11px] flex h-[632px] shrink-0 flex-col rounded-[5px] bg-[#194575] pl-[11px]">
                <Text className="ml-px mt-[13px] h-[20px] text-[15.9px] text-white">Statistic Results</Text>
                <BarChart
                  className="mt-[7px] h-[585px] w-[230px]"
                  box={[1325, 1048, 230, 585]}
                  axis={1377}
                  top={1059}
                  bottom={1599}
                  grid={[1402, 1426.8, 1451.6, 1476.4, 1501.2, 1526, 1551]}
                  bars={[{ y: 1143, h: 372, to: 1538, fill: "#a52f3e" }]}
                  cats={[["count", 1329.5]]}
                  labelX={1367.5}
                  ticks={[["0", 1376.7], ["150000", 1451.3], ["300000", 1526]]}
                  tickY={1618}
                  size={13.7}
                  line={1.3}
                  tickLen={6}
                />
              </div>
            </div>
          </main>
        </div>

        {/* statistic details */}
        <StatPanel className="mt-[28px] h-[1599px] w-[639px] pl-px pr-[2px] pt-[11px]" inner="pl-[28px]">
          <BarChart
            className="mt-[17px] h-[1468px] w-[575px]"
            box={[1676, 138, 575, 1468]}
            axis={1805}
            top={166}
            bottom={1521}
            band={[168, 1521, 2243]}
            grid={[1867.8, 1930.3, 1992.8, 2055.1, 2117.4, 2179.9, 2242.4]}
            bars={[{ y: 377, h: 934, to: 2209, fill: "#b24a5c" }]}
            cats={[["count", 844.5, 93]]}
            labelX={1781}
            ticks={[["0", 1804.5], ["150000", 1992], ["300000", 2179]]}
            tickY={1569}
            size={34.3}
            line={3}
            tickLen={15}
          >
            <div className="absolute left-[357px] top-[734px] size-[11px] rounded-full bg-[#e8201c]" />
            <Tooltip className="left-[23px] top-[972px] w-[437px]" name="count" value="324,129" dot="bg-[#a52f3e]" />
          </BarChart>
        </StatPanel>

        <StatPanel className="ml-[16px] mt-[28px] h-[1599px] w-[650px] pb-[6px] pl-[7px] pr-[10px] pt-[11px]" inner="pl-[28px]">
          <BarChart
            className="mt-[17px] h-[1463px] w-[574px]"
            box={[2337, 138, 574, 1463]}
            axis={2486}
            top={166}
            bottom={1516}
            band={[572, 707, 2899]}
            grid={[2544.9, 2604.3, 2663.7, 2723, 2782, 2841.4, 2900.8]}
            bars={CLASS_BARS.map(([i, to, fill]) => ({ y: 188.5 + i * 134.8, h: 92.5, to, fill }))}
            cats={CATS.map((c, i) => [c, 235 + i * 134.8] as [string, number])}
            labelX={2463}
            ticks={[["0", 2486.4], ["90000", 2663.7], ["180000", 2841.4]]}
            tickY={1563.5}
            size={34.3}
            line={3}
            tickLen={14}
          >
            <Tooltip className="left-[105px] top-[570px] w-[350px]" name="region" value="155" dot="bg-[#0a12c0]" />
          </BarChart>
        </StatPanel>

        <StatPanel className="ml-[15px] mt-[28px] h-[1599px] w-[648px] pb-[4px] pl-[7px] pr-[8px] pt-[13px]" inner="pl-[28px]">
          <BarChart
            className="mt-[17px] h-[1464px] w-[574px]"
            box={[3002, 140, 574, 1464]}
            axis={3129}
            top={169}
            bottom={1519}
            band={[844, 1519, 3564]}
            grid={[3192.9, 3255.1, 3317.3, 3379.5, 3441.8, 3503.5, 3565.8]}
            bars={[{ y: 274, h: 465, to: 3528.5, fill: "#25b340" }, { y: 947.5, h: 465, to: 3133, fill: "#b24a5c" }]}
            cats={[["!=city", 505.5, 92], ["=city", 1180, 79]]}
            labelX={3106}
            ticks={[["0", 3129], ["150000", 3316.4], ["300000", 3503]]}
            tickY={1567}
            size={34.3}
            line={3}
            tickLen={14}
          >
            <Tooltip className="left-[38px] top-[1111px] w-[386px]" name="=city" value="3,141" dot="bg-[#a52f3e]" />
          </BarChart>
        </StatPanel>
      </div>

      {/* layer style details */}
      <div className="flex shrink-0 items-start pt-[23px]">
        <StylePanel className="ml-[40px] h-[2032px] w-[844px] pb-[5px] pl-[5px] pr-[10px] pt-[7px]">
          <Text className={`mt-[43px] ${HEADING}`}>Layer Style</Text>
          <StyleSelect className="mt-[27px] h-[112px] w-[751px]">Scatter Plot</StyleSelect>
          <div className={`mt-[30px] h-[432px] w-[758px] ${FIELDSET}`}>
            <Text className={`ml-[37px] mt-[28px] ${SUBLABEL}`}>Color</Text>
            <SubInput className="ml-[37px] mt-[33px] h-[118px] bg-[#a52f3e]">rgb(227, 39, 39)</SubInput>
            <Text className={`ml-[37px] mt-[29px] ${SUBLABEL}`}>Width</Text>
            <Slider className={`mt-[35px] ${SLIDER}`} track="h-[29px]" thumb="size-[56px]" at={27} />
          </div>
          <Button className={`mt-[30px] w-[751px] ${ENTER}`}>Enter</Button>
        </StylePanel>

        <StylePanel className="ml-[57px] h-[2032px] w-[838px] pb-[5px] pl-[4px] pr-[5px] pt-[8px]">
          <Text className={`mt-[44px] ${HEADING}`}>Layer Style</Text>
          <StyleSelect className="mt-[28px] h-[112px] w-[750px]">Heat Plot</StyleSelect>
          <div className={`mt-[29px] h-[424px] w-[757px] ${FIELDSET}`}>
            <Text className={`ml-[38px] mt-[28px] ${SUBLABEL}`}>Gradient</Text>
            <SubSelect className="ml-[38px] mt-[33px] h-[112px]">Jet</SubSelect>
            <Text className={`ml-[38px] mt-[28px] ${SUBLABEL}`}>Radius</Text>
            <Slider className={`mt-[34px] ${SLIDER}`} track="h-[29px]" thumb="size-[56px]" at={38.5} />
          </div>
          <Button className={`mt-[30px] w-[750px] ${ENTER}`}>Enter</Button>
        </StylePanel>

        <StylePanel className="-mt-px ml-[56px] h-[2033px] w-[850px] pb-[11px] pl-[11px] pr-[12px] pt-[15px]">
          <Text className={`mt-[43px] ${HEADING}`}>Layer Style</Text>
          <StyleSelect className="mt-[27px] h-[110px] w-[748px]">Classified / Filter Plot</StyleSelect>
          <div className={`mt-[30px] h-[1006px] w-[755px] ${FIELDSET}`}>
            <Text className={`ml-[36px] mt-[29px] ${SUBLABEL}`}>Attribution</Text>
            <SubSelect className="ml-[36px] mt-[33px] h-[109px]">fclass</SubSelect>
            <Text className={`ml-[36px] mt-[30px] ${SUBLABEL}`}>Item</Text>
            <SubSelect className="ml-[36px] mt-[32px] h-[109px]">city</SubSelect>
            <Text className={`ml-[36px] mt-[29px] ${SUBLABEL}`}>Color</Text>
            <SubInput className="ml-[36px] mt-[33px] h-[117px] bg-[#a52f3e]">rgb(227, 39, 39)</SubInput>
            <Text className={`ml-[36px] mt-[29px] ${SUBLABEL}`}>Width</Text>
            <Slider className={`mt-[33px] ${SLIDER}`} track="h-[29px]" thumb="size-[56px]" at={27} />
            <div className="ml-[16px] mt-[39px] flex shrink-0 gap-[42px]">
              <Button soft className={`w-[203px] ${SMALLBTN}`}>+</Button>
              <Button soft className={`w-[204px] ${SMALLBTN}`}>-</Button>
              <Button soft className={`w-[202px] ${SMALLBTN}`}>clear</Button>
            </div>
          </div>
          <div className={`mt-[31px] h-[556px] w-[755px] ${FIELDSET}`}>
            <Text className="ml-[37px] mt-[30px] h-[50px] text-[44.8px] text-[#c5d1df]">Style Scripts</Text>
            <div className="ml-[23px] mt-[29px] flex h-[413px] w-[688px] shrink-0 overflow-hidden rounded-[13px] border-[7px] border-[#c3cedd] bg-[#194575]">
              <div className="flex w-[618px] shrink-0 flex-col pl-[22px] pt-[14px] text-[51.5px] leading-[74px] text-[#bccadb]">
                <div>city,173,90,187,0.7,1</div>
                <div>county,166,127,83,0.9,2</div>
                <div>farm,214,208,201,0.9,1</div>
                <div>hamlet,115,144,251,0.9,</div>
                <div>2</div>
              </div>
              <svg className="h-full w-[56px] shrink-0" viewBox="2541 3170 56 399">
                <rect x="2541" y="3170" width="56" height="399" fill="#b9c6d5" />
                <path d="M2551 3225L2568.500 3199L2586 3225Z" fill="#6a7788" />
                <rect x="2552" y="3255" width="33" height="69" rx="15" fill="#6a7788" />
                <path d="M2551 3458L2568.500 3483L2586 3458Z" fill="#6a7788" />
                <path d="M2541 3513H2597" stroke="#9dacbf" strokeWidth="2" />
                <path d="M2566 3567L2592 3541M2582 3567L2592 3556" stroke="#3d4c60" strokeWidth="3.500" />
              </svg>
            </div>
          </div>
          <Button className={`mt-[30px] w-[748px] ${ENTER}`}>Enter</Button>
        </StylePanel>

        <StylePanel className="ml-[56px] h-[2032px] w-[848px] pb-[7px] pl-[9px] pr-[10px] pt-[11px]">
          <Text className={`mt-[44px] ${HEADING}`}>Layer Style</Text>
          <StyleSelect className="mt-[28px] h-[109px] w-[749px]">Rule-based Plot</StyleSelect>
          <div className={`mt-[31px] h-[1014px] w-[756px] ${FIELDSET}`}>
            <Text className={`ml-[37px] mt-[28px] ${SUBLABEL}`}>Attribution</Text>
            <SubSelect className="ml-[37px] mt-[33px] h-[109px]">fclass</SubSelect>
            <Text className={`ml-[37px] mt-[32px] tracking-[-0.27px] ${SUBLABEL}`}>Filter | = | != | &gt; | &gt;= | &lt; | &lt;= |</Text>
            <SubInput className="ml-[37px] mt-[32px] h-[116px] bg-[#194575]">!=city</SubInput>
            <Text className={`ml-[37px] mt-[29px] ${SUBLABEL}`}>Color</Text>
            <SubInput className="ml-[37px] mt-[34px] h-[116px] bg-[#25b37d]">rgb(39, 227, 129)</SubInput>
            <Text className={`ml-[37px] mt-[30px] ${SUBLABEL}`}>Width</Text>
            <Slider className={`mt-[33px] ${SLIDER}`} track="h-[29px]" thumb="size-[56px]" at={27} />
            <div className="ml-[15px] mt-[39px] flex shrink-0 gap-[43px]">
              <Button soft className={`w-[204px] ${SMALLBTN}`}>+</Button>
              <Button soft className={`w-[204px] ${SMALLBTN}`}>-</Button>
              <Button soft className={`w-[202px] ${SMALLBTN}`}>clear</Button>
            </div>
          </div>
          <div className={`mt-[31px] h-[558px] w-[756px] ${FIELDSET}`}>
            <Text className="ml-[37px] mt-[30px] h-[50px] text-[44.8px] text-[#c5d1df]">Style Scripts</Text>
            <div className="relative ml-[22px] mt-[29px] h-[415px] w-[690px] shrink-0 rounded-[13px] border-[7px] border-[#c3cedd] bg-[#194575] pl-[22px] pt-[15px] text-[51.8px] leading-[74px] text-[#bccadb]">
              <div>=city,227,39,39,1,2</div>
              <div>!=city,39,227,129,1,2</div>
              <svg className="absolute bottom-[2px] right-[4px] h-[26px] w-[28px]" viewBox="0 0 28 26" fill="none">
                <path d="M1 25L26 0M14 25L26 13" stroke="#0f2c4b" strokeWidth="4" />
                <path d="M5 25L27 4M18 25L27 17" stroke="#b9c6d5" strokeWidth="2.500" />
              </svg>
            </div>
          </div>
          <Button className={`mt-[30px] w-[749px] ${ENTER}`}>Enter</Button>
        </StylePanel>
      </div>

      {/* frames, arrows and lettered callouts drawn over the figure */}
      <svg className="pointer-events-none absolute inset-0 h-full w-full" viewBox="0 0 3632 3791">
        <DashedFrame x={9.5} y={13} r={871} b={674} radius={37} start={67} />
        <DashedFrame x={914.7} y={13} r={1553} b={674} radius={36} start={113.5} />
        <DashedFrame x={1621.4} y={13.8} r={3626} b={1644} radius={29} start={111} />
        <DashedFrame x={5.2} y={1690} r={3626} b={3783.5} radius={30} start={1788} />
        <g fill="#ffc000">
          <path d="M140 685L188.500 750H165V880H115V750H92Z" />
          <path d="M146 1679L98 1635L120 1637V1545H170.500V1637L194 1635Z" />
          <path d="M1433 687L1481.700 752H1458.700V812H1408V752H1385Z" />
          <path d="M1612.300 1295L1545.300 1344V1320H1490V1269.500H1545.300V1247Z" />
        </g>
        <Badge letter="A" x={755.4} y={99.8} dy={-5} />
        <Badge letter="D" x={1435.4} y={99.8} dx={3} />
        <Badge letter="E" x={3520.8} y={93} dy={1.500} />
        <Badge letter="A" x={143.3} y={929} dy={-6} />
        <Badge letter="B" x={145} y={1490.5} dx={2} dy={4} />
        <Badge letter="D" x={1435.3} y={865} dx={3} dy={-4} />
        <Badge letter="E" x={1438} y={1294.500} dx={1} dy={1} />
        <Badge letter="C" x={1195} y={1570.7} dx={-3} dy={-2} />
        <Badge letter="D" x={1063} y={1347.2} r={38.500} size={64} stroke={7} />
        <Badge letter="B" x={139} y={3663} dx={2} dy={3} r={60} />
      </svg>
    </div>
  );
}
